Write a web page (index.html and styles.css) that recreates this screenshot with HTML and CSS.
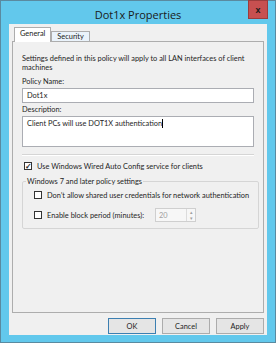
FILE: index.html
```html
<!DOCTYPE html>
<html lang="en">
<head>
    <meta charset="UTF-8">
    <title>Dot1x Properties</title>
    <link rel="stylesheet" href="styles.css">
</head>
<body>
    <div class="window">
        <div class="titlebar">
            <div class="title">Dot1x Properties</div>
            <div class="close">x</div>
        </div>
        <div class="client">
            <div class="tabs">
                <div class="tab active">General</div>
                <div class="tab">Security</div>
            </div>
            <div class="panel">
                <p class="intro">Settings defined in this policy will apply to all LAN interfaces of client machines</p>

                <label class="label">Policy Name:</label>
                <div class="input">Dot1x</div>

                <label class="label">Description:</label>
                <div class="input textarea">Client PCs will use DOT1X authentication<span class="caret"></span></div>

                <div class="separator"></div>

                <div class="check-row">
                    <span class="box checked">&#10003;</span>
                    <span>Use Windows Wired Auto Config service for clients</span>
                </div>

                <fieldset class="group">
                    <legend>Windows 7 and later policy settings</legend>
                    <div class="check-row">
                        <span class="box"></span>
                        <span>Don’t allow shared user credentials for network authentication</span>
                    </div>
                    <div class="check-row">
                        <span class="box"></span>
                        <span class="block-label">Enable block period (minutes):</span>
                        <div class="spinner">
                            <span class="spin-value">20</span>
                            <span class="arrows"><i>&#9652;</i><i>&#9662;</i></span>
                        </div>
                    </div>
                </fieldset>
            </div>
            <div class="buttons">
                <div class="btn default">OK</div>
                <div class="btn">Cancel</div>
                <div class="btn">Apply</div>
            </div>
        </div>
    </div>
</body>
</html>
```

FILE: styles.css
```css
* {
    margin: 0;
    padding: 0;
    box-sizing: border-box;
}
body {
    background: #ffffff;
    font-family: 'Lato', 'Open Sans', sans-serif;
    font-size: 7.4px;
    color: #1e1e1e;
}
.window {
    width: 276px;
    height: 343px;
    background: #62c8ec;
    border: 1px solid #5a8aa0;
    padding: 0 8px 7px 8px;
    display: flex;
    flex-direction: column;
}
.titlebar {
    position: relative;
    height: 23px;
    display: flex;
    justify-content: center;
    align-items: center;
}
.title {
    font-family: 'Open Sans', sans-serif;
    font-size: 11px;
    color: #1a1a1a;
    margin-top: 3px;
}
.close {
    position: absolute;
    top: -1px;
    right: -1px;
    width: 20px;
    height: 19px;
    background: #c75050;
    border: 1px solid #9c3c3c;
    color: #1a1a1a;
    font-family: 'Liberation Sans', sans-serif;
    font-weight: bold;
    font-size: 9px;
    display: flex;
    justify-content: center;
    align-items: center;
}
.client {
    flex: 1;
    background: #f0f0f0;
    padding: 4px 3px 0 3px;
    display: flex;
    flex-direction: column;
}
.tabs {
    display: flex;
    align-items: flex-end;
    height: 14px;
    padding-left: 2px;
    margin-bottom: -1px;
}
.tab {
    height: 11px;
    padding: 0 5px;
    border: 1px solid #adadad;
    border-bottom: none;
    background: #eaf3fb;
    line-height: 10px;
    color: #1a1a1a;
}
.tab.active {
    height: 15px;
    background: #ffffff;
    position: relative;
    z-index: 1;
    padding: 0 5px;
    line-height: 12px;
}
.panel {
    height: 272px;
    border: 1px solid #adadad;
    padding: 12px 9px 0 9px;
    background: #f0f0f0;
}
.intro {
    line-height: 9px;
    margin-bottom: 5px;
}
.label {
    display: block;
    line-height: 9px;
    margin-bottom: 2px;
}
.input {
    height: 15px;
    background: #ffffff;
    border: 1px solid #abadb3;
    padding: 0 4px;
    line-height: 13px;
    margin-bottom: 2px;
}
.textarea {
    height: 31px;
    margin-bottom: 7px;
}
.caret {
    display: inline-block;
    width: 1px;
    height: 9px;
    background: #000;
    vertical-align: -2px;
}
.separator {
    border-top: 1px solid #d5d5d5;
    border-bottom: 1px solid #ffffff;
    margin-bottom: 5px;
}
.check-row {
    display: flex;
    align-items: center;
    height: 10px;
    margin-left: 2px;
    margin-bottom: 6px;
    white-space: nowrap;
}
.box {
    width: 8px;
    height: 8px;
    border: 1px solid #333;
    background: #ffffff;
    margin-right: 5px;
    font-size: 8px;
    line-height: 6px;
    text-align: center;
    font-weight: bold;
    flex-shrink: 0;
}
.group {
    border: 1px solid #d5d5d5;
    border-radius: 2px;
    height: 52px;
    padding: 4px 9px 0 11px;
}
.group legend {
    padding: 0 1px;
    margin-left: -8px;
    line-height: 9px;
}
.group .check-row {
    margin-left: 0;
    margin-bottom: 10px;
}
.block-label {
    width: 108px;
}
.spinner {
    width: 41px;
    height: 14px;
    border: 1px solid #cfcfcf;
    background: #f7f7f7;
    display: flex;
    justify-content: space-between;
    align-items: center;
    padding-left: 3px;
    color: #a0a0a0;
}
.arrows {
    display: flex;
    flex-direction: column;
    width: 9px;
    height: 12px;
    border-left: 1px solid #dcdcdc;
    font-size: 5px;
    line-height: 6px;
    text-align: center;
}
.arrows i {
    font-style: normal;
}
.buttons {
    display: flex;
    justify-content: flex-end;
    gap: 6px;
    padding-top: 5px;
}
.btn {
    width: 48px;
    height: 16px;
    border: 1px solid #acacac;
    background: #e5e5e5;
    display: flex;
    justify-content: center;
    align-items: center;
}
.btn.default {
    border-color: #3c7fb1;
}
```
